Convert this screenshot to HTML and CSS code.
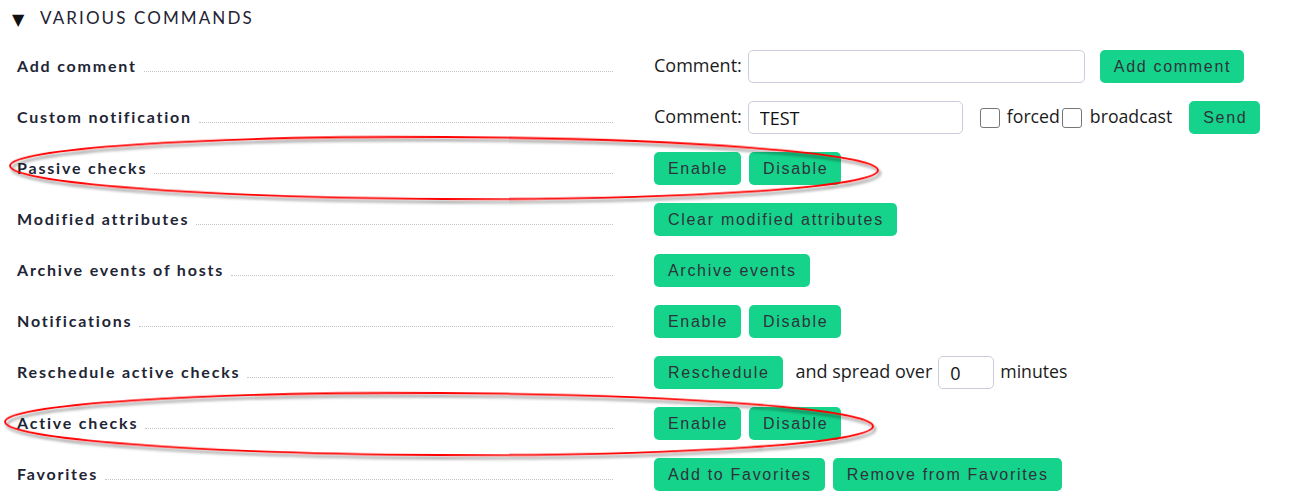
FILE: index.html
```html
<!DOCTYPE html>
<html>
<head>
<meta charset="utf-8">
<link rel="stylesheet" href="styles.css">
</head>
<body>
<div class="page">
  <div class="header"><span class="tri">&#9660;</span><span class="title">VARIOUS COMMANDS</span></div>
  <div class="rows">
    <div class="row">
      <div class="label"><span class="ltext">Add comment</span><span class="leader"></span></div>
      <div class="ctrl">
        <span class="txt">Comment:</span><input class="inp w336" type="text">
        <button class="btn ml15">Add comment</button>
      </div>
    </div>
    <div class="row">
      <div class="label"><span class="ltext">Custom notification</span><span class="leader"></span></div>
      <div class="ctrl">
        <span class="txt">Comment:</span><input class="inp w215" type="text" value="TEST">
        <span class="cb ml17"></span><span class="txt sm ml7">forced</span><span class="cb ml2"></span><span class="txt sm ml8">broadcast</span>
        <button class="btn ml17">Send</button>
      </div>
    </div>
    <div class="row">
      <div class="label"><span class="ltext">Passive checks</span><span class="leader"></span></div>
      <div class="ctrl btns"><button class="btn">Enable</button><button class="btn">Disable</button></div>
    </div>
    <div class="row">
      <div class="label"><span class="ltext">Modified attributes</span><span class="leader"></span></div>
      <div class="ctrl btns"><button class="btn">Clear modified attributes</button></div>
    </div>
    <div class="row">
      <div class="label"><span class="ltext">Archive events of hosts</span><span class="leader"></span></div>
      <div class="ctrl btns"><button class="btn">Archive events</button></div>
    </div>
    <div class="row">
      <div class="label"><span class="ltext">Notifications</span><span class="leader"></span></div>
      <div class="ctrl btns"><button class="btn">Enable</button><button class="btn">Disable</button></div>
    </div>
    <div class="row">
      <div class="label"><span class="ltext">Reschedule active checks</span><span class="leader"></span></div>
      <div class="ctrl">
        <button class="btn">Reschedule</button>
        <span class="txt ml13">and spread over</span><input class="inp w56" type="text" value="0"><span class="txt sm ml6">minutes</span>
      </div>
    </div>
    <div class="row">
      <div class="label"><span class="ltext">Active checks</span><span class="leader"></span></div>
      <div class="ctrl btns"><button class="btn">Enable</button><button class="btn">Disable</button></div>
    </div>
    <div class="row">
      <div class="label"><span class="ltext">Favorites</span><span class="leader"></span></div>
      <div class="ctrl btns"><button class="btn">Add to Favorites</button><button class="btn">Remove from Favorites</button></div>
    </div>
  </div>
  <svg class="marks" width="1296" height="503" viewBox="0 0 1296 503">
    <defs>
      <filter id="sh" x="-5%" y="-30%" width="110%" height="160%">
        <feGaussianBlur in="SourceAlpha" stdDeviation="1.5"/>
        <feOffset dx="2" dy="3" result="b"/>
        <feComponentTransfer><feFuncA type="linear" slope="0.5"/></feComponentTransfer>
        <feMerge><feMergeNode/><feMergeNode in="SourceGraphic"/></feMerge>
      </filter>
    </defs>
    <ellipse cx="444" cy="168" rx="434" ry="31" fill="none" stroke="#ff0000" stroke-width="1.8" filter="url(#sh)" transform="rotate(0.3 444 168)"/>
    <ellipse cx="439" cy="424" rx="434" ry="31" fill="none" stroke="#ff0000" stroke-width="1.8" filter="url(#sh)" transform="rotate(0.3 439 424)"/>
  </svg>
</div>
</body>
</html>
```

FILE: styles.css
```css
* { box-sizing: border-box; }
html, body { margin: 0; padding: 0; background: #fff; }
.page {
  position: relative;
  width: 1296px;
  height: 503px;
  overflow: hidden;
  font-family: "Open Sans", "Noto Sans", sans-serif;
}
.header {
  display: flex;
  align-items: center;
  height: 34px;
  padding-left: 12px;
  color: #1e2233;
}
.tri {
  font-size: 16px;
  width: 28px;
  font-family: "DejaVu Sans", sans-serif;
  padding-top: 4px;
  color: #111;
}
.title {
  font-family: Lato, sans-serif;
  font-size: 17px;
  letter-spacing: 2.1px;
}
.rows {
  display: flex;
  flex-direction: column;
  padding-left: 17px;
  padding-top: 7px;
}
.row {
  display: flex;
  align-items: center;
  height: 51px;
}
.label {
  width: 596px;
  display: flex;
  align-items: baseline;
  padding-bottom: 2px;
  font-family: Lato, sans-serif;
  font-weight: bold;
  font-size: 16px;
  letter-spacing: 1.8px;
  color: #1e2535;
}
.leader {
  flex: 1;
  margin-left: 7px;
  border-bottom: 1px dotted #c4c4c4;
}
.ctrl {
  margin-left: 41px;
  display: flex;
  align-items: center;
}
.btns { gap: 8px; }
.txt {
  font-size: 18px;
  color: #1b1b1b;
  padding-bottom: 3px;
}
.txt.sm { font-size: 17.7px; }
.inp {
  height: 33px;
  border: 1px solid #cdcbdc;
  border-radius: 5px;
  padding: 0 11px;
  font-family: "Open Sans", sans-serif;
  font-size: 18px;
  color: #111;
  outline: none;
  margin-left: 6px;
}
.w336 { width: 337px; }
.w215 { width: 215px; }
.w56 { width: 56px; }
.btn {
  height: 33px;
  border: none;
  border-radius: 5px;
  background: #15d38b;
  color: #2e333b;
  font-family: "Liberation Sans", Arial, sans-serif;
  font-size: 16px;
  letter-spacing: 1.7px;
  padding: 0 13px 0 14px;
}
.cb {
  width: 20px;
  height: 20px;
  border: 1.5px solid #767676;
  border-radius: 3px;
  background: #fff;
}
.ml2 { margin-left: 2px; }
.ml6 { margin-left: 6px; }
.ml7 { margin-left: 7px; }
.ml8 { margin-left: 8px; }
.ml13 { margin-left: 13px; }
.ml15 { margin-left: 15px; }
.ml17 { margin-left: 17px; }
.marks {
  position: absolute;
  left: 0;
  top: 0;
  pointer-events: none;
}
```
